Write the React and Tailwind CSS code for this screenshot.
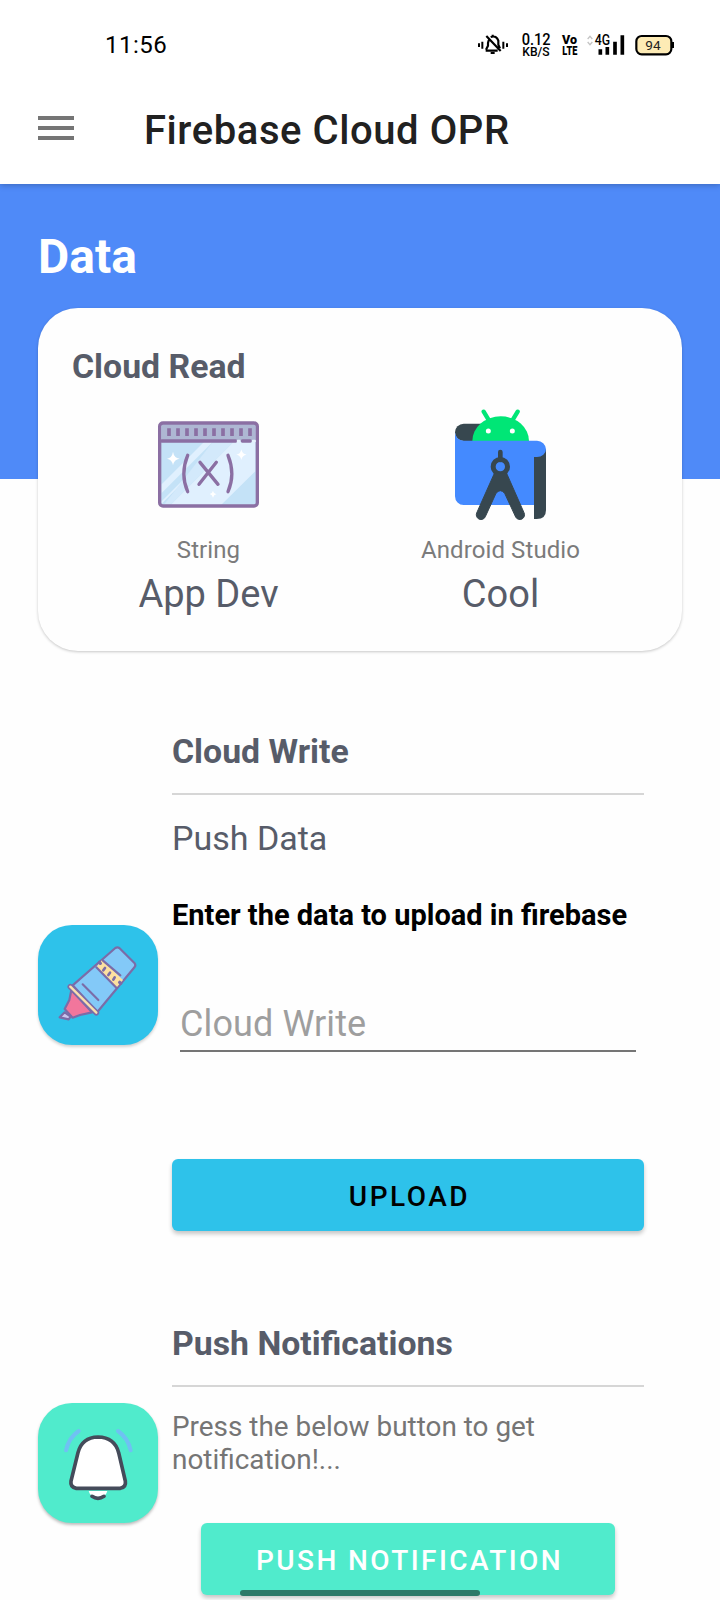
import React from "react";

function StatusBar() {
  return (
    <div className="flex h-[90px] items-center pl-[105px]">
      <span className="w-[371px] text-[24px] leading-[28px] tracking-[0.5px] text-black">11:56</span>
      <svg className="h-[50px] w-[204px]" viewBox="48 0 612 150" fill="none" stroke="#000" strokeWidth="6">
        <path d="M57 70v11M67 65v21M130 65v21M141 70v11" />
        <path d="M78 89l6-12V69q1-7 5-11M92 51q18-6 23 11v12l5 11M77 92h36M79 48l43 45M98 44v6M92 99h12" strokeWidth="6.5" />
        <g fill="#000" stroke="none" fontFamily="Roboto, sans-serif">
          <text x="185" y="75" fontSize="48" fontWeight="500" textLength="87" lengthAdjust="spacingAndGlyphs">0.12</text>
          <text x="187" y="109" fontSize="38" fontWeight="500" textLength="82" lengthAdjust="spacingAndGlyphs">KB/S</text>
          <text x="306" y="73" fontSize="38" fontWeight="900" textLength="45" lengthAdjust="spacingAndGlyphs">Vo</text>
          <text x="307" y="105" fontSize="38" fontWeight="900" textLength="45" lengthAdjust="spacingAndGlyphs">LTE</text>
          <text x="404" y="75" fontSize="42" fontWeight="500" textLength="46" lengthAdjust="spacingAndGlyphs">4G</text>
        </g>
        <path d="M383 57l7-8 7 8M383 66l7 8 7-8" stroke="#c4c4c4" strokeWidth="4" />
        <path d="M421 88v16M442 81v23M465 65v39M487 46v58" strokeWidth="11" />
        <rect x="529" y="48" width="105" height="55" rx="16" fill="#fdebb5" strokeWidth="6.5" />
        <path d="M639 66v18" />
        <text x="556" y="90" fontSize="41" fill="#222" stroke="none" fontFamily="Roboto, sans-serif" textLength="46" lengthAdjust="spacingAndGlyphs">94</text>
      </svg>
    </div>
  );
}

function CodeWindowIcon() {
  return (
    <svg className="h-[130px] w-[140px]" viewBox="-6 0 420 390" fill="none" stroke="#8b6fa3" strokeWidth="10" strokeLinecap="round">
      <rect x="61" y="69" width="290" height="249" rx="10" fill="#c4e2f7" stroke="none" />
      <path d="M65 253L192 126H218L65 279zM65 304L243 126H250L65 311zM92 314L280 126H346V214L244 314z" fill="#e0f0fe" stroke="none" />
      <path d="M218 126H280L92 314H72z" fill="#d3e9fb" stroke="none" />
      <path d="M65 73H347V124H65z" fill="#aeb7d3" stroke="none" />
      <rect x="59" y="69" width="293" height="249" rx="10" />
      <path d="M65 123H287M307 123H331" />
      <path d="M294 123h4M339 123h5" stroke="#e6f2fc" strokeWidth="8" />
      <path d="M87 85v23M114 85v23M141 85v23M168 85v23M195 85v23M222 85v23M249 85v23M276 85v23M303 85v23M330 85v23" strokeLinecap="butt" strokeWidth="11" />
      <path d="M143 166Q120 222 143 275M264 166Q287 222 264 275M180 187L234 253M229 187L177 253" />
      <path d="M99 155Q102 174 119 176Q102 178 99 196Q96 178 81 176Q96 174 99 155zM304 148Q306 162 320 164Q306 166 304 180Q302 166 289 164Q302 162 304 148zM219 272Q221 281 230 282Q221 284 219 293Q217 284 209 282Q217 281 219 272z" fill="#fff" stroke="none" />
    </svg>
  );
}

function AndroidStudioIcon() {
  return (
    <svg className="h-[130px] w-[140px]" viewBox="0 0 420 390" fill="none">
      <path d="M160 71H101A26 26 0 0 0 101 123H160z" fill="#37474f" />
      <path d="M127 123A85 74 0 0 1 297 123z" fill="#00e676" />
      <path d="M161 35L175 58M263 35L249 58" stroke="#00e676" strokeWidth="13" strokeLinecap="round" />
      <circle cx="175" cy="93" r="7.500" fill="#fff" />
      <circle cx="247" cy="93" r="7.500" fill="#fff" />
      <path d="M312 160L348 147V330Q348 357 320 357H312z" fill="#37474f" />
      <path d="M75 97A26 25 0 0 0 101 122H321A27 27 0 0 1 348 148A27 23 0 0 1 321 171H312V315H101A26 26 0 0 1 75 289z" fill="#448aff" />
      <path d="M211 156V180" stroke="#37474f" strokeWidth="14" strokeLinecap="round" />
      <circle cx="211" cy="200" r="21.500" stroke="#37474f" strokeWidth="15" />
      <path d="M194 218L229 218L282 338A14 14 0 0 1 257 351L224 280Q211 264 198 280L166 350A14 14 0 0 1 140 339z" fill="#37474f" stroke="#37474f" strokeWidth="3" />
    </svg>
  );
}

function MarkerIcon() {
  return (
    <svg className="h-[120px] w-[120px]" viewBox="54 75 360 360" fill="none" stroke="#7b6ca8" strokeWidth="6.500" strokeLinejoin="round" strokeLinecap="round">
      <path d="M286 144Q292 140 298 144L344 190Q348 195 344 201L232 336L158 256z" fill="#83c9f8" />
      <path d="M246 180L309 240L289 263L229 202z" fill="#fde0a0" stroke="none" />
      <path d="M229 202L289 263M248 181L301 226" />
      <path d="M238 187l3 3M299 247l3 3" strokeWidth="10" />
      <path d="M250 211l5-7M265 225l5-7M280 239l4-7" strokeWidth="8" />
      <path d="M188 253L235 300" />
      <path d="M154 270L148 300L134 327L158 353L180 345L216 337z" fill="#f2769c" />
      <path d="M134 337L119 352L146 358L152 350z" fill="#c9c6ee" />
      <path d="M151 260L229 338" strokeWidth="17" />
      <path d="M151 260L229 338" stroke="#fbdfad" strokeWidth="7" />
    </svg>
  );
}

function BellIcon() {
  return (
    <svg className="h-[120px] w-[120px]" viewBox="54 69 360 360" fill="none" strokeLinecap="round">
      <path d="M206 333H262Q258 351 234 352Q210 351 206 333z" fill="#fff" />
      <path d="M216 349Q234 361 252 349" stroke="#454b5a" strokeWidth="11" />
      <path d="M169 325Q150 321 153 303L174 218Q186 172 234 171Q284 172 296 218L316 303Q319 321 301 325z" fill="#fff" stroke="#454b5a" strokeWidth="11" />
      <path d="M176 153Q146 174 138 211M294 153Q324 174 332 211" stroke="#6fc1f3" strokeWidth="12" />
    </svg>
  );
}

function Stat({ icon, label, value }) {
  return (
    <div className="flex flex-1 flex-col items-center">
      {icon}
      <p className="pl-px text-[24px] leading-[40px] tracking-[0.1px] text-[#7b7b7b]">{label}</p>
      <p className="pl-px pt-px text-[38px] leading-[46px] text-[#575c69]">{value}</p>
    </div>
  );
}

function Heading({ children }) {
  return (
    <h3 className="border-b-2 border-[#d6d6d6] pb-[21px] pt-px text-[33.8px] font-bold leading-[40px] text-[#575c69]">{children}</h3>
  );
}

export default function App() {
  return (
    <div className="h-[1600px] w-[720px] overflow-hidden bg-[#fefefe] font-[Roboto,sans-serif]">
      <header className="relative h-[184px] bg-white shadow-[0_1px_6px_rgba(0,0,0,0.25)]">
        <StatusBar />
        <div className="flex h-20 items-center pl-[38px]">
          <div className="flex w-9 flex-col gap-1.5 pb-1">
            <span className="h-1 bg-[#757575]" />
            <span className="h-1 bg-[#757575]" />
            <span className="h-1 bg-[#757575]" />
          </div>
          <h1 className="pl-[70px] pt-0.5 text-[40px] font-medium leading-[48px] tracking-[0.57px] text-[#212121]">Firebase Cloud OPR</h1>
        </div>
      </header>

      <div className="h-[295px] bg-[#4f8af8] pl-[38px] pt-[45px]">
        <h2 className="text-[48px] font-bold leading-[56px] text-white">Data</h2>
      </div>

      <section className="relative mx-[38px] -mt-[171px] h-[343px] rounded-[40px] bg-[#fefefe] pt-[39px] shadow-[0_1px_3px_rgba(0,0,0,0.22)]">
        <h3 className="pl-[34px] text-[33.8px] font-bold leading-[40px] text-[#575c69]">Cloud Read</h3>
        <div className="flex pl-6 pr-9 pt-[13px]">
          <Stat icon={<CodeWindowIcon />} label="String" value="App Dev" />
          <Stat icon={<AndroidStudioIcon />} label="Android Studio" value="Cool" />
        </div>
      </section>

      <section className="mt-20 flex h-[508px] items-center gap-3.5 pl-[38px]">
        <div className="rounded-[34px] bg-[#2ec2ea] shadow-[0_2px_3px_rgba(0,0,0,0.18)]">
          <MarkerIcon />
        </div>
        <div className="flex h-full w-[472px] flex-col">
          <Heading>Cloud Write</Heading>
          <p className="mt-[23px] text-[34px] leading-[40px] text-[#575c69]">Push Data</p>
          <p className="mt-[40px] text-[29px] font-bold leading-[34px] text-black">Enter the data to upload in firebase</p>
          <div className="mx-2 mt-[70px] border-b-2 border-[#757575] pb-1">
            <p className="text-[36px] leading-[44px] tracking-[0.1px] text-[#9e9e9e]">Cloud Write</p>
          </div>
          <button className="mt-[107px] h-[72px] rounded-[6px] bg-[#2ec2ea] pl-[3px] pt-[3px] text-[28px] font-medium tracking-[2.5px] text-black shadow-[0_3px_4px_rgba(0,0,0,0.22)]">UPLOAD</button>
        </div>
      </section>

      <section className="relative mt-[84px] flex h-[280px] items-center gap-3.5 pl-[38px]">
        <div className="rounded-[34px] bg-[#50ebcc] shadow-[0_2px_3px_rgba(0,0,0,0.25)]">
          <BellIcon />
        </div>
        <div className="flex h-full w-[472px] flex-col">
          <Heading>Push Notifications</Heading>
          <p className="mt-[23px] w-[420px] text-[27.9px] leading-[33px] text-[#757575]">Press the below button to get notification!...</p>
          <button className="mx-[29px] mt-[47px] h-[72px] shrink-0 rounded-[6px] bg-[#50ebcc] pl-[3px] pt-[3px] text-[28px] font-medium tracking-[2.4px] text-white shadow-[0_3px_4px_rgba(0,0,0,0.22)]">PUSH NOTIFICATION</button>
        </div>
        <div className="absolute left-60 top-[267px] h-1.5 w-60 rounded-full bg-[#2d7a69]" />
      </section>
    </div>
  );
}
